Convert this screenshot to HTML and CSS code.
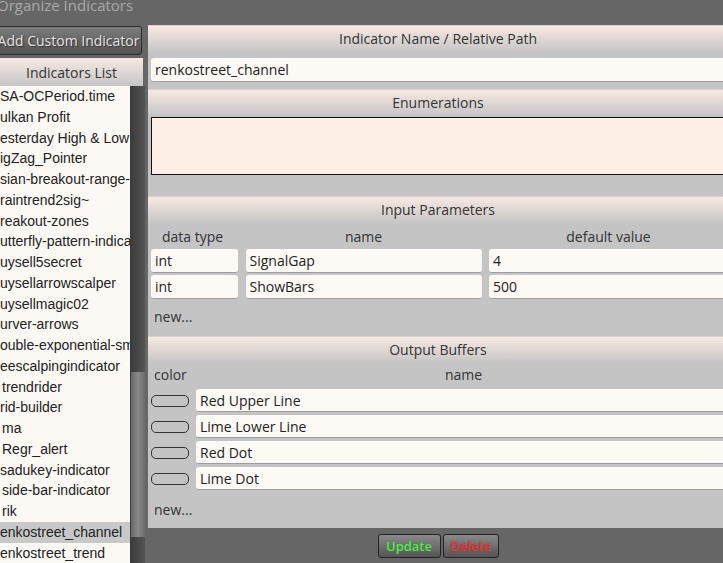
FILE: index.html
```html
<!DOCTYPE html>
<html lang="en">
<head>
    <meta charset="UTF-8">
    <title>Organize Indicators</title>
    <link rel="stylesheet" href="styles.css">
</head>
<body>
    <div class="title">Organize Indicators</div>
    <div class="main">
        <div class="sidebar">
            <button class="add-btn">Add Custom Indicator</button>
            <div class="list-head">Indicators List</div>
            <div class="list-wrap">
                <ul class="ind-list">
                    <li>SA-OCPeriod.time</li>
                    <li>ulkan Profit</li>
                    <li>esterday High &amp; Low</li>
                    <li>igZag_Pointer</li>
                    <li>sian-breakout-range-indicator</li>
                    <li>raintrend2sig~</li>
                    <li>reakout-zones</li>
                    <li>utterfly-pattern-indicator</li>
                    <li>uysell5secret</li>
                    <li>uysellarrowscalper</li>
                    <li>uysellmagic02</li>
                    <li>urver-arrows</li>
                    <li>ouble-exponential-smoothing</li>
                    <li>eescalpingindicator</li>
                    <li class="ind">trendrider</li>
                    <li>rid-builder</li>
                    <li class="ind">ma</li>
                    <li class="ind">Regr_alert</li>
                    <li>sadukey-indicator</li>
                    <li class="ind">side-bar-indicator</li>
                    <li class="ind">rik</li>
                    <li class="selected">enkostreet_channel</li>
                    <li>enkostreet_trend</li>
                </ul>
                <div class="scrollbar"><div class="thumb"></div></div>
            </div>
        </div>

        <div class="editor">
            <section class="panel panel-name">
                <div class="panel-head">Indicator Name / Relative Path</div>
                <input type="text" class="field" value="renkostreet_channel">
            </section>

            <section class="panel panel-enum">
                <div class="panel-head">Enumerations</div>
                <textarea class="enum-box"></textarea>
            </section>

            <section class="panel panel-params">
                <div class="panel-head">Input Parameters</div>
                <div class="param-grid">
                    <div class="col-label">data type</div>
                    <div class="col-label center">name</div>
                    <div class="col-label center">default value</div>
                    <input type="text" class="field" value="int">
                    <input type="text" class="field" value="SignalGap">
                    <input type="text" class="field" value="4">
                    <input type="text" class="field" value="int">
                    <input type="text" class="field" value="ShowBars">
                    <input type="text" class="field" value="500">
                </div>
                <div class="new-link">new...</div>
            </section>

            <section class="panel panel-buffers">
                <div class="panel-head">Output Buffers</div>
                <div class="buffer-grid">
                    <div class="col-label">color</div>
                    <div class="col-label center">name</div>
                    <span class="swatch"></span>
                    <input type="text" class="field" value="Red Upper Line">
                    <span class="swatch"></span>
                    <input type="text" class="field" value="Lime Lower Line">
                    <span class="swatch"></span>
                    <input type="text" class="field" value="Red Dot">
                    <span class="swatch"></span>
                    <input type="text" class="field" value="Lime Dot">
                </div>
                <div class="new-link">new...</div>
            </section>

            <div class="actions">
                <button class="update">Update</button>
                <button class="delete">Delete</button>
            </div>
        </div>
    </div>
</body>
</html>
```

FILE: styles.css
```css
body {
    margin: 0;
    background: #666;
    font-family: 'Open Sans', 'DejaVu Sans', sans-serif;
    overflow: hidden;
    height: 563px;
}
.title {
    height: 25px;
    margin-left: -3px;
    margin-top: -5px;
    font-size: 15px;
    color: #a9a9a9;
    line-height: 20px;
}
.main {
    display: flex;
    margin-top: 5px;
}
.sidebar {
    width: 146px;
    flex-shrink: 0;
}
.add-btn {
    display: block;
    width: 149px;
    height: 29px;
    margin: 1px 0 0 -7px;
    padding: 0 0 0 2px;
    font-family: 'Open Sans', sans-serif;
    font-size: 14px;
    color: #e4e4e4;
    text-shadow: 1px 1px 1px #333;
    background: linear-gradient(#7c7c7c, #525252);
    border: 1px solid #2e2e2e;
    border-radius: 3px;
}
.list-head {
    width: 143px;
    height: 28px;
    margin-top: 3px;
    line-height: 30px;
    text-align: center;
    font-size: 14px;
    color: #333;
    background: linear-gradient(#f6e9e2, #c6c6c6);
}
.list-wrap {
    display: flex;
    height: 480px;
}
.ind-list {
    list-style: none;
    margin: 0;
    padding: 0;
    width: 130px;
    background: #fcf8f4;
    overflow: hidden;
    font-family: 'Liberation Sans', Arial, sans-serif;
    font-size: 14px;
    color: #222;
}
.ind-list li {
    height: 20.75px;
    line-height: 20.75px;
    white-space: nowrap;
}
.ind-list li.ind {
    padding-left: 2px;
}
.ind-list li.selected {
    background: #c8c8c8;
}
.scrollbar {
    width: 15px;
    background: linear-gradient(to right, #3a3a3a, #4a4a4a 60%, #555);
}
.thumb {
    height: 165px;
    margin: 286px 0 0 1px;
    background: linear-gradient(to right, #666, #8a8a8a 50%, #6c6c6c);
}
.editor {
    width: 580px;
    flex-shrink: 0;
    margin-left: 2px;
}
.panel {
    background: #c4c4c4;
    padding: 0 0 0 3px;
}
.panel-head {
    height: 28px;
    margin-left: -3px;
    line-height: 25px;
    text-align: center;
    font-size: 14px;
    color: #333;
    background: linear-gradient(#f7e9e2, #c4c4c4);
    border-top: 1px solid #d8d0cc;
    box-sizing: border-box;
}
.field {
    display: block;
    box-sizing: border-box;
    width: 100%;
    height: 24px;
    margin: 0;
    padding: 0 4px;
    font-family: 'Open Sans', sans-serif;
    font-size: 14px;
    color: #222;
    background: #fdf9f5;
    border: none;
    border-bottom: 1px solid #9c9c9c;
    border-radius: 3px;
    outline: none;
}
.panel-name {
    padding-bottom: 7px;
}
.panel-name .field {
    margin-top: 5px;
}
.panel-enum {
    padding-bottom: 21px;
}
.enum-box {
    display: block;
    box-sizing: border-box;
    width: 100%;
    height: 58px;
    margin: 0;
    background: #fdeee6;
    border: 1px solid #111;
    resize: none;
}
.param-grid {
    display: grid;
    grid-template-columns: 87px 236px 1fr;
    column-gap: 7.5px;
    row-gap: 2px;
}
.col-label {
    height: 20px;
    line-height: 22px;
    font-size: 14px;
    color: #333;
    padding-left: 11px;
    margin-top: 2px;
    margin-bottom: 1px;
}
.col-label.center {
    text-align: center;
    padding-left: 0;
}
.buffer-grid .col-label {
    padding-left: 3px;
    margin-top: 1px;
    margin-bottom: 1px;
    line-height: 20px;
}
.new-link {
    height: 20px;
    line-height: 20px;
    margin-top: 8px;
    padding-left: 3px;
    font-size: 14px;
    color: #333;
}
.panel-params {
    padding-bottom: 9px;
}
.buffer-grid {
    display: grid;
    grid-template-columns: 38px 1fr;
    column-gap: 7px;
    row-gap: 3px;
    align-items: center;
}
.buffer-grid .field {
    height: 23px;
}
.swatch {
    display: block;
    height: 12px;
    border: 1.5px solid #333;
    border-radius: 5px;
    box-sizing: border-box;
}
.panel-buffers {
    padding-bottom: 8px;
}
.panel-buffers .new-link {
    margin-top: 10px;
}
.actions {
    display: flex;
    justify-content: center;
    gap: 2px;
    padding-top: 6px;
}
.actions button {
    height: 24px;
    padding: 0;
    font-family: 'Open Sans', sans-serif;
    font-size: 13px;
    font-weight: 600;
    background: linear-gradient(#8a8a8a, #555);
    border: 1px solid #222;
    border-radius: 3px;
}
.actions .update {
    width: 63px;
    color: #5fe05a;
    text-shadow: 0 0 2px #2a8a2a;
}
.actions .delete {
    width: 56px;
    color: #e63a3a;
    text-shadow: 0 0 2px #8a2a2a;
}
```
